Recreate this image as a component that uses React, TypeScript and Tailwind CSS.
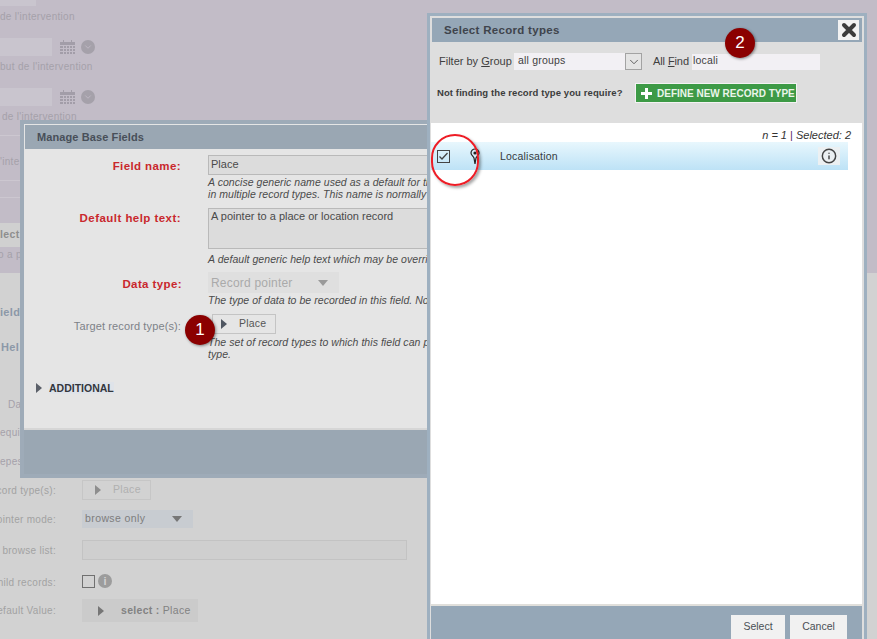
import { ChevronDown, Info } from "lucide-react";

const font = { fontFamily: '"Liberation Sans", Arial, sans-serif' };

function Calendar() {
  return (
    <svg width="15" height="14" viewBox="0 0 15 14" className="text-[#a29da8]">
      <path fill="currentColor" d="M0 2h3V0h1v2h7V0h1v2h3v12H0z" />
      <path stroke="#c2bcc7" strokeWidth="1" d="M0 5.5h15M0 8.5h15M0 11.5h15M3.5 5v9M6.5 5v9M9.5 5v9M12.5 5v9" />
    </svg>
  );
}

function DateRow() {
  return (
    <div className="mt-[14px] flex h-[18px] items-center">
      <div className="h-[18px] w-[52px] bg-[#c9c5ce]" />
      <div className="ml-2"><Calendar /></div>
      <div className="ml-[6px] flex size-[14px] items-center justify-center rounded-full bg-[#a5a1aa] text-[#c2bcc7]">
        <ChevronDown size={10} strokeWidth={2} />
      </div>
    </div>
  );
}

function Caption({ children, className = "" }: { children: React.ReactNode; className?: string }) {
  return <div className={`h-[14px] whitespace-nowrap text-[10px] leading-[14px] tracking-[0.3px] text-[#a5a1aa] ${className}`}>{children}</div>;
}

function BackRow({ label, className, labelClass = "", children }: { label: string; className: string; labelClass?: string; children: React.ReactNode }) {
  return (
    <div className={`flex items-center ${className}`}>
      <div className={`flex w-[56px] justify-end overflow-hidden whitespace-nowrap text-[10px] tracking-[0.3px] text-[#a2a2a2] ${labelClass}`}>{label}</div>
      <div className="ml-[26px]">{children}</div>
    </div>
  );
}

function Triangle({ className }: { className: string }) {
  return <span className={`inline-block border-y-[5px] border-l-[6px] border-y-transparent ${className}`} />;
}

function Hint({ lines }: { lines: string[] }) {
  return (
    <div className="text-[10.5px] italic leading-[12px] tracking-[0.05px] whitespace-nowrap text-[#4b4b4b]">
      {lines.map((line) => <div key={line}>{line}</div>)}
    </div>
  );
}

function Badge({ n, className }: { n: number; className: string }) {
  return (
    <div className={`absolute flex size-[30px] items-center justify-center rounded-full bg-[#8b0000] text-[17px] text-white shadow-[1px_1px_3px_rgba(0,0,0,0.45)] ${className}`}>{n}</div>
  );
}

function ManageDialog() {
  return (
    <section className="absolute left-[20px] top-[120px] flex h-[358px] w-[430px] flex-col border-[4px] border-[#9eabb8] bg-[#e5e5e5]">
      <header className="ml-[1px] mt-[1px] flex h-[24px] shrink-0 items-center bg-[#9aa7b3] pl-[12px] text-[11px] font-bold tracking-[0.1px] text-[#484f59]">Manage Base Fields</header>
      <div className="relative flex-1 pl-[184px] pt-[6px]">
        <div className="relative h-[20px] w-[300px] border border-[#b9b9b9] bg-[#dcdcdc] pl-[2px] text-[11px] leading-[17px] text-[#4a4a4a]">
          Place
          <b className="absolute right-[326px] top-[2px] whitespace-nowrap text-[11.5px] tracking-[0.4px] text-[#c9282d]">Field name:</b>
        </div>
        <div className="mt-[1px]">
          <Hint lines={["A concise generic name used as a default for this field wherever it is used", "in multiple record types. This name is normally"]} />
        </div>
        <div className="relative mt-[8px] h-[41px] w-[300px] border border-[#b9b9b9] bg-[#dcdcdc] pl-[2px] text-[11px] leading-[14px] text-[#4a4a4a]">
          A pointer to a place or location record
          <b className="absolute right-[326px] top-[2px] whitespace-nowrap text-[11.5px] tracking-[0.45px] text-[#c9282d]">Default help text:</b>
        </div>
        <div className="mt-[4px]">
          <Hint lines={["A default generic help text which may be overridden"]} />
        </div>
        <div className="relative mt-[7px] flex h-[21px] w-[131px] items-center justify-between bg-[#dfdfdf] pl-[3px] pr-[11px] text-[12px] tracking-[0.2px] text-[#aaaaaa]">
          Record pointer
          <span className="border-x-[5px] border-t-[6px] border-x-transparent border-t-[#9a9a9a]" />
          <b className="absolute right-[157px] top-[4px] whitespace-nowrap text-[11.5px] tracking-[0.4px] text-[#c9282d]">Data type:</b>
        </div>
        <div className="mt-[1px]">
          <Hint lines={["The type of data to be recorded in this field. Note"]} />
        </div>
        <div className="relative ml-[4px] mt-[8px] flex h-[20px] w-[64px] items-center border border-[#c4c4c4] pl-[8px] text-[10.5px] tracking-[0.2px] text-[#555]">
          <Triangle className="border-l-[#4f5661]" />
          <span className="ml-[12px]">Place</span>
          <span className="absolute right-[94px] top-[3px] whitespace-nowrap text-[11px] tracking-[0.12px] text-[#7d8288]">Target record type(s):</span>
        </div>
        <div className="mt-[2px]">
          <Hint lines={["The set of record types to which this field can point", "type."]} />
        </div>
        <div className="absolute left-[12px] top-[233px] flex items-center">
          <Triangle className="border-l-[#5b6069]" />
          <span className="ml-[7px] bg-[#dfe3e9] text-[10.5px] font-bold leading-[12px] text-[#33373d]">ADDITIONAL</span>
        </div>
      </div>
      <div className="h-[2px] shrink-0 bg-[#d6d6d6]" />
      <div className="h-[44px] shrink-0 bg-[#9aa7b3]" />
    </section>
  );
}

function SelectDialog() {
  return (
    <section className="absolute left-[427px] top-[13px] flex h-[640px] w-[440px] flex-col border-x-[3px] border-t-[3px] border-[#9eb0c0] bg-[#dedede] px-[1px]">
      <div className="h-[2px] shrink-0" />
      <header className="ml-[1px] mr-[1px] flex h-[24px] shrink-0 items-center justify-between bg-[#95a7b7] pl-[12px] pr-[3px] pt-[1px] text-[11.5px] font-bold tracking-[0.3px] text-[#3f444c]">
        Select Record types
        <button className="-mt-[1px] flex h-[20px] w-[21px] items-center justify-center bg-[#f2f2f2]">
          <svg width="16" height="16" viewBox="0 0 16 16"><path d="M3 3l10 10M13 3L3 13" fill="none" stroke="#3c3c3c" strokeWidth="4" strokeLinecap="round" /></svg>
        </button>
      </header>
      <div className="ml-[8px] mt-[11px] flex h-[17px] shrink-0 items-center text-[11px] text-[#3f3f3f]">
        <span className="w-[75px] pb-[1px]">Filter by <u>G</u>roup</span>
        <div className="flex h-[17px] w-[111px] items-center bg-[#f2f0f4] pb-[1px] pl-[4px] text-[10.5px] tracking-[0.2px]">all groups</div>
        <div className="flex h-[17px] w-[17px] items-center justify-center border border-[#a3a3a3] bg-[#e4e4e4] text-[#444]"><ChevronDown size={14} strokeWidth={1.4} /></div>
        <span className="ml-[11px] w-[39px] pb-[1px] tracking-[-0.1px]">All <u>F</u>ind</span>
        <div className="flex h-[16px] w-[128px] items-center bg-[#f2f0f4] pb-[1px] pl-[1px] text-[10.5px] tracking-[0.2px]">locali</div>
      </div>
      <div className="ml-[6px] mt-[13px] flex h-[20px] shrink-0 items-center">
        <span className="w-[198px] whitespace-nowrap text-[9.5px] font-bold tracking-[0.1px] text-[#3c3c3c]">Not finding the record type you require?</span>
        <button className="flex h-[20px] w-[162px] items-center border border-[#f3f3f3] bg-[#3d9a46] pl-[5px] text-[10px] font-bold whitespace-nowrap text-[#eaf5ea]">
          <svg width="11" height="11" viewBox="0 0 11 11" className="mr-[5px] shrink-0"><path fill="#fff" d="M4 0h3v4h4v3H7v4H4V7H0V4h4z" /></svg>
          DEFINE NEW RECORD TYPE
        </button>
      </div>
      <div className="mr-[1px] mt-[20px] flex-1 bg-white pt-[6px]">
        <div className="mr-[11px] text-right text-[11px] italic leading-[12px] text-[#333]">n = 1 <span className="not-italic text-[#5c2b6b]">|</span> Selected: 2</div>
        <div className="mr-[14px] mt-[1px] flex h-[28px] items-center bg-gradient-to-b from-[#e8f7fd] to-[#bde2f6]">
          <div className="ml-[6px] flex size-[13px] items-center justify-center border border-[#444]">
            <svg width="11" height="9" viewBox="0 0 11 9"><path d="M1.5 4.5 4 7l5.5-6" fill="none" stroke="#444" strokeWidth="1.3" /></svg>
          </div>
          <svg width="10" height="17" viewBox="0 0 10 17" className="ml-[20px]">
            <path d="M5 1a4 4 0 0 0-4 4c0 2 2 3 3 5l1 6 1-6c1-2 3-3 3-5a4 4 0 0 0-4-4z" fill="#d7ecf7" stroke="#222" strokeWidth="1.2" />
            <circle cx="5" cy="5" r="1.6" fill="#222" />
          </svg>
          <span className="ml-[20px] flex-1 pt-[1px] text-[10.5px] tracking-[0.2px] text-[#353a40]">Localisation</span>
          <div className="mr-[8px] flex h-[18px] w-[22px] items-center justify-center bg-[#ecf0f2] text-[#444]"><Info size={16} strokeWidth={2.2} /></div>
        </div>
      </div>
      <div className="mr-[1px] h-[2px] shrink-0 bg-[#e0dfdb]" />
      <footer className="mr-[1px] flex h-[47px] shrink-0 items-start justify-end gap-[5px] bg-[#95a7b7] pr-[15px] pt-[9px] text-[10.5px] text-[#4a4f55]">
        <button className="h-[24px] w-[54px] bg-[#f1f1f1]">Select</button>
        <button className="h-[24px] w-[57px] bg-[#f1f1f1]">Cancel</button>
      </footer>
    </section>
  );
}

export default function App() {
  return (
    <main className="relative flex h-[639px] w-[877px] flex-col overflow-hidden bg-[#d2d2d2]" style={font}>
      {/* page behind the dialogs */}
      <div className="flex h-[273px] shrink-0 flex-col bg-[#c2bcc7]">
        <div className="h-[6px] w-[36px] shrink-0 bg-[#c9c5ce]" />
        <Caption className="mt-[4px]">de l'intervention</Caption>
        <DateRow />
        <Caption className="mt-[4px]">but de l'intervention</Caption>
        <DateRow />
        <Caption className="ml-[2px] mt-[4px]">de l'intervention</Caption>
        <div className="mt-[11px] h-[1px] w-[20px] bg-[#ccc7d0]" />
        <Caption className="mt-[19px]">'inte</Caption>
        <div className="mt-[11px] h-[1px] w-[20px] bg-[#ccc7d0]" />
        <div className="mt-[16px] h-[1px] w-[20px] bg-[#ccc7d0]" />
        <div className="mt-[25px] flex h-[24px] w-[20px] items-center bg-[#d0d0d0] text-[10.5px] font-bold tracking-[0.4px] text-[#8e8e8e]">lect</div>
        <Caption className="-ml-[2px] mt-[1px]">o a p</Caption>
      </div>
      <div className="flex flex-col">
        <div className="mt-[33px] h-[12px] text-[11px] font-bold leading-[12px] tracking-[0.3px] text-[#8c98a8]">ield</div>
        <div className="mt-[23px] h-[12px] pl-[1px] text-[11px] font-bold leading-[12px] tracking-[0.3px] text-[#8c98a8]">Hel</div>
        <Caption className="ml-[8px] mt-[45px]">Da</Caption>
        <Caption className="mt-[14px]">equi</Caption>
        <Caption className="mt-[15px]">epes</Caption>
        <BackRow label="Target record type(s):" labelClass="pt-[1px]" className="mt-[11px] h-[20px]">
          <div className="flex h-[20px] w-[69px] items-center border border-[#c6c6c6] pl-[12px] text-[10.5px] tracking-[0.3px] text-[#b0b0b0]">
            <Triangle className="border-l-[#8e8e8e]" />
            <span className="ml-[12px]">Place</span>
          </div>
        </BackRow>
        <BackRow label="Pointer mode:" labelClass="pt-[1px]" className="mt-[10px] h-[18px]">
          <div className="flex h-[18px] w-[111px] items-center justify-between bg-[#c8ccd1] pl-[3px] pr-[11px] text-[10.5px] tracking-[0.4px] text-[#7d7d7d]">
            browse only
            <span className="border-x-[5px] border-t-[6px] border-x-transparent border-t-[#777]" />
          </div>
        </BackRow>
        <BackRow label="Filter browse list:" className="mt-[12px] h-[20px]">
          <div className="h-[20px] w-[325px] border border-[#c3c3c3] bg-[#cfcfcf]" />
        </BackRow>
        <BackRow label="Child records:" labelClass="pt-[3px]" className="mt-[14px] h-[14px]">
          <div className="flex items-center">
            <div className="size-[13px] border border-[#707070]" />
            <div className="ml-[3px] flex size-[14px] items-center justify-center rounded-full bg-[#9c9c9c] text-[11px] font-bold text-[#d2d2d2]">i</div>
          </div>
        </BackRow>
        <BackRow label="Default Value:" labelClass="pb-[1px]" className="mt-[11px] h-[23px]">
          <div className="flex h-[23px] w-[116px] items-center bg-[#cbcbcb] pl-[16px] text-[10.5px] tracking-[0.3px] text-[#828282]">
            <Triangle className="border-l-[#767676]" />
            <span className="ml-[17px]"><b>select :</b> Place</span>
          </div>
        </BackRow>
      </div>

      <ManageDialog />
      <SelectDialog />

      {/* annotations */}
      <Badge n={1} className="left-[185px] top-[315px]" />
      <Badge n={2} className="left-[725px] top-[28px]" />
      <div className="absolute left-[431px] top-[134px] h-[52px] w-[48px] rounded-full border-2 border-[#ee1c25] shadow-[2px_2px_3px_rgba(0,0,0,0.35)]" />
    </main>
  );
}
